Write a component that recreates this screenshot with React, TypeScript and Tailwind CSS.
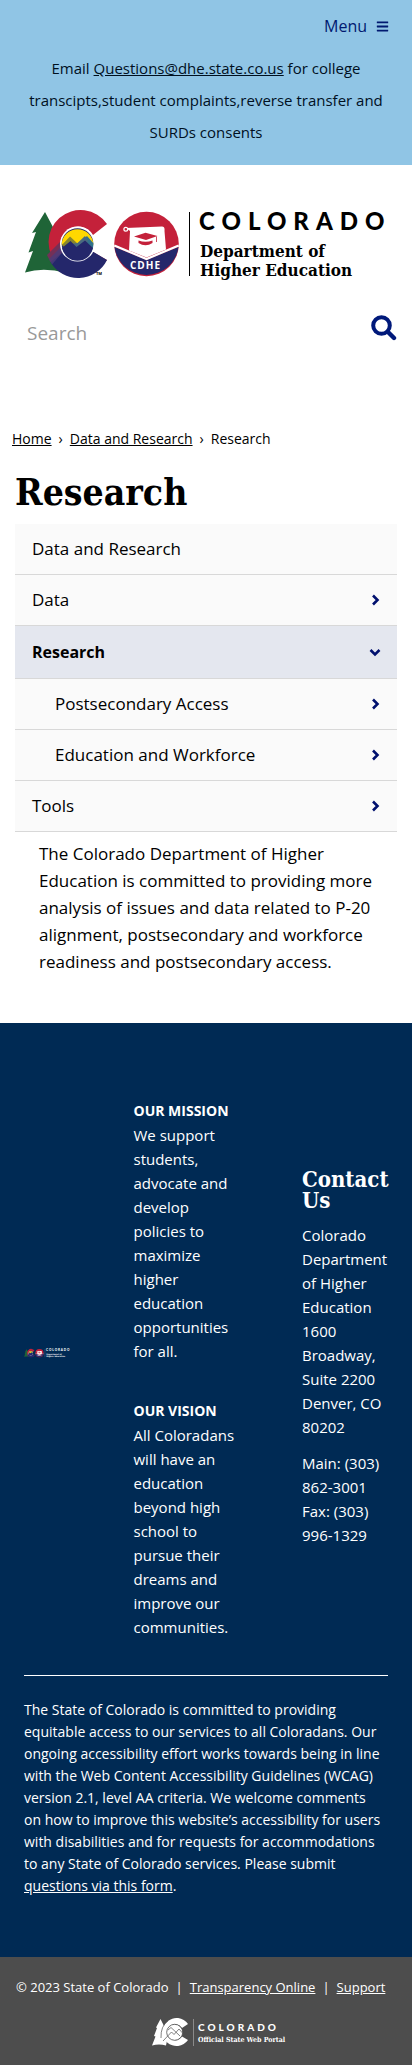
import { FaBars } from "react-icons/fa";

const slab = "font-['DejaVu_Serif_Condensed','DejaVu_Serif',serif] font-bold";

function DepartmentLogo({ className, onDark = false }: { className: string; onDark?: boolean }) {
  const ink = onDark ? "#ffffff" : "#000000";
  return (
    <svg viewBox="0 0 364 70" className={`overflow-visible ${className}`} role="img" aria-label="Colorado Department of Higher Education">
      <path d="M21 1 L8 22 L12 21 L4.500 41.500 L9 40 L1 61.500 Q20 56 42 62 L46 20 L30 18 Z" fill="#1f6437" />
      <path d="M83 13 A32 32 0 1 0 83 49 L69 41 A17 17 0 1 1 69 24 Z" fill="#c4213a" />
      <path d="M26.500 51 L42 36 L60 40 L69.500 41 L83 49 A32 32 0 0 1 26.500 51 Z" fill="#24276b" />
      <path d="M23 44 L38 29 L45 36 L26.500 51 Z" fill="#733057" />
      <path d="M25 48 L40 33 L43 36 L28 53.500 Z" fill="#4b3c7b" opacity=".8" />
      <circle cx="53.500" cy="33" r="17.500" fill={onDark ? "#e7e9ee" : "#ffffff"} />
      <circle cx="53.500" cy="33" r="15.800" fill="#24276b" />
      <path d="M37.700 34 A15.800 15.800 0 0 1 69.300 34 L64 30 L53 38 L46 30 Z" fill="#ffd800" />
      <path d="M37.800 34 L46 25.500 L54 33 L46 41 Z" fill="#87862d" />
      <path d="M51 35 L63 25 L69.300 32 L69 37 L60 39 Z" fill="#31718b" />
      <path d="M46 33 L53.500 32 L61 25 L64 30 L57 41 L48 39 Z" fill="#4a6a80" />
      <path d="M38 37 L46.500 30 L52.500 36 L61 29.500 L69 37 A15.800 15.800 0 0 1 38 37 Z" fill="#24276b" />
      <text x="72" y="64" className="font-['Open_Sans',sans-serif] text-[4px] font-bold" fill={ink}>TM</text>
      <circle cx="122.500" cy="33" r="32.300" fill="#c4213a" />
      <path d="M90.500 36 L122.500 49 L154.500 36 A32.300 32.300 0 0 1 90.500 36 Z" fill="#24276b" />
      <path d="M90.300 34.500 L122.500 48 L154.700 34.500" fill="none" stroke="#fff" strokeWidth="2.200" />
      <path d="M102 17 L138 15.500 Q141 15.500 140.500 20 L142 38.500 L122.500 46.500 L105 39.500 L106 20 Z" fill="#fff" />
      <circle cx="101.800" cy="18.300" r="1.900" fill="#c4213a" stroke="#fff" strokeWidth="1.200" />
      <path d="M110 25.500 L121.500 21.800 L133.500 25 L122 29 Z" fill="#c4213a" />
      <path d="M114.500 29.500 Q121.500 32 128.500 29.500 V32 Q121.500 36.500 114.500 32 Z" fill="#c4213a" />
      <path d="M132.500 25.500 V31" stroke="#c4213a" strokeWidth=".8" />
      <text x="106" y="58" className="font-['Open_Sans',sans-serif] text-[10px] font-bold tracking-[1px]" fill="#fff">CDHE</text>
      <path d="M165.500 1 V65" stroke={ink} strokeWidth="1" />
      <text x="175" y="19" className="font-['Lato',sans-serif] text-[24px] font-black tracking-[7px]" fill={ink}>COLORADO</text>
      <text x="176" y="46" className={`${slab} text-[17px]`} fill={ink}>Department of</text>
      <text x="176" y="65" className={`${slab} text-[17px]`} fill={ink}>Higher Education</text>
    </svg>
  );
}

function PortalLogo() {
  return (
    <svg viewBox="0 0 136 29" className="h-[29px] w-[136px]" role="img" aria-label="Colorado Official State Web Portal">
      <path d="M8.500 1 L4 9.500 L5 10 L2 18 L3.500 18.500 L0 27.500 Q7 25.500 14 27.500 L18 8 L12 8 Z" fill="#fff" />
      <path d="M36 6 A14 14 0 1 0 36 22 L30 18.500 A8 8 0 1 1 30 10 Z" fill="#fff" />
      <circle cx="22.700" cy="14.300" r="8" fill="#fff" stroke="#4d4d4d" strokeWidth=".8" />
      <path d="M9 20 Q8.500 8 16 3 M11 23 L19.500 14 L22 16.500 L27 11 L30.500 15 M16 12 L19 9.500 L28 18" fill="none" stroke="#4d4d4d" strokeWidth=".7" />
      <path d="M41.500 1 V28" stroke="#9a9a9a" strokeWidth=".8" />
      <text x="46" y="13" className="font-['Lato',sans-serif] text-[10px] font-black tracking-[3px]" fill="#fff">COLORADO</text>
      <text x="46" y="24" className={`${slab} text-[7px]`} fill="#fff">Official State Web Portal</text>
    </svg>
  );
}

function Chevron({ down = false }: { down?: boolean }) {
  return (
    <svg viewBox="0 0 12 12" className="size-3" fill="none" stroke="currentColor" strokeWidth="2.600" aria-hidden="true">
      <path d={down ? "M1.500 4 L6 8.500 L10.500 4" : "M4 1.500 L8.500 6 L4 10.500"} />
    </svg>
  );
}

function Magnifier() {
  return (
    <svg viewBox="0 0 26 26" className="size-[26px]" fill="none" stroke="currentColor" aria-hidden="true">
      <circle cx="10.500" cy="10.500" r="8.300" strokeWidth="4" />
      <path d="M17 17 L23 23" strokeWidth="4.400" strokeLinecap="round" />
    </svg>
  );
}

type Item = { label: string; expandable?: boolean; active?: boolean; child?: boolean };

const items: Item[] = [
  { label: "Data and Research" },
  { label: "Data", expandable: true },
  { label: "Research", expandable: true, active: true },
  { label: "Postsecondary Access", expandable: true, child: true },
  { label: "Education and Workforce", expandable: true, child: true },
  { label: "Tools", expandable: true },
];

function SectionMenu() {
  return (
    <nav aria-label="Section" className="mx-[15px]">
      <ul>
        {items.map(({ label, expandable, active, child }) => (
          <li
            key={label}
            className={`flex items-center justify-between border-b border-[#d8d8d8] pr-4 ${child ? "pl-10" : "pl-[17px]"} ${active ? "h-[53px] bg-[#e4e7ef] font-bold" : "h-[51px] bg-[#fafafa]"}`}
          >
            <a href="#" className={active ? "text-[16px] leading-6" : "text-[17px] leading-6"}>{label}</a>
            {expandable && (
              <button type="button" aria-label={`Toggle ${label}`} className="text-[#00106e]">
                <Chevron down={active} />
              </button>
            )}
          </li>
        ))}
      </ul>
    </nav>
  );
}

export default function App() {
  return (
    <div className="bg-white font-['Open_Sans',sans-serif] text-black">
      <header>
        <div className="bg-[#90c5e5] px-5 pt-3 pb-[17px]">
          <div className="flex justify-end pr-[3px]">
            <button type="button" className="flex items-center gap-[9px] text-[16px] leading-7 text-[#001970]">
              Menu <FaBars size={13} />
            </button>
          </div>
          <p className="pt-3 text-center text-[15px] leading-8 text-[#00101f]">
            Email <a href="mailto:Questions@dhe.state.co.us" className="underline">Questions@dhe.state.co.us</a> for college
            <br />transcipts,student complaints,reverse transfer and
            <br />SURDs consents
          </p>
        </div>
        <a href="#" className="block px-6 pt-[46px]">
          <DepartmentLogo className="h-auto w-full" />
        </a>
        <form className="mt-8 flex items-start pr-[15px] pl-[27px]" onSubmit={(e) => e.preventDefault()}>
          <input
            type="search"
            aria-label="Search"
            placeholder="Search"
            className="h-10 min-w-0 flex-1 bg-transparent text-[19px] outline-none placeholder:text-[#999999]"
          />
          <button type="submit" aria-label="Submit search" className="pt-[2px] text-[#00197a]">
            <Magnifier />
          </button>
        </form>
      </header>

      <main>
        <nav aria-label="Breadcrumb" className="px-3 pt-[76px]">
          <ol className="flex gap-[7px] text-[14px] leading-5">
            <li><a href="#" className="underline">Home</a></li>
            <li aria-hidden="true">›</li>
            <li><a href="#" className="underline">Data and Research</a></li>
            <li aria-hidden="true">›</li>
            <li>Research</li>
          </ol>
        </nav>
        <h1 className={`${slab} px-[15px] pt-[23px] pb-3 text-[37px] leading-10`}>Research</h1>
        <SectionMenu />
        <p className="px-[39px] pt-2 pb-12 text-[17px] leading-[27px] whitespace-nowrap">
          The Colorado Department of Higher
          <br />Education is committed to providing more
          <br />analysis of issues and data related to P-20
          <br />alignment, postsecondary and workforce
          <br />readiness and postsecondary access.
        </p>
      </main>

      <footer className="text-white">
        <div className="bg-[#002a54] px-6 pt-[76px] pb-[60px]">
          <div className="flex items-center justify-between border-b border-white pb-9 text-[15px] leading-6">
            <div className="w-[46px] pb-8">
              <DepartmentLogo onDark className="h-auto w-full" />
            </div>
            <div className="flex w-[105px] flex-col gap-9">
              <section>
                <h2 className="text-[14px] leading-6 font-bold whitespace-nowrap">OUR MISSION</h2>
                <p>We support<br />students,<br />advocate and<br />develop<br />policies to<br />maximize<br />higher<br />education<br />opportunities<br />for all.</p>
              </section>
              <section>
                <h2 className="text-[14px] leading-6 font-bold whitespace-nowrap">OUR VISION</h2>
                <p className="whitespace-nowrap">All Coloradans<br />will have an<br />education<br />beyond high<br />school to<br />pursue their<br />dreams and<br />improve our<br />communities.</p>
              </section>
            </div>
            <section className="w-[86px] pb-[22px] whitespace-nowrap">
              <h2 className={`${slab} pb-3 text-[22px] leading-[21px]`}>Contact<br />Us</h2>
              <p>Colorado<br />Department<br />of Higher<br />Education<br />1600<br />Broadway,<br />Suite 2200<br />Denver, CO<br />80202</p>
              <p className="pt-3">Main: (303)<br />862-3001<br />Fax: (303)<br />996-1329</p>
            </section>
          </div>
          <p className="pt-[23px] text-[14px] leading-[22px] whitespace-nowrap">
            The State of Colorado is committed to providing
            <br />equitable access to our services to all Coloradans. Our
            <br />ongoing accessibility effort works towards being in line
            <br />with the Web Content Accessibility Guidelines (WCAG)
            <br />version 2.1, level AA criteria. We welcome comments
            <br />on how to improve this website’s accessibility for users
            <br />with disabilities and for requests for accommodations
            <br />to any State of Colorado services. Please submit
            <br /><a href="#" className="underline">questions via this form</a>.
          </p>
        </div>
        <div className="flex flex-col items-center gap-5 border-b border-[#90c5e5] bg-[#4d4d4d] px-4 pt-[19px] pb-[18px]">
          <div className="flex gap-[7px] self-start text-[13px] leading-[22px] whitespace-nowrap">
            <span>© 2023 State of Colorado</span>
            <span>|</span>
            <a href="#" className="underline">Transparency Online</a>
            <span>|</span>
            <a href="#" className="underline">Support</a>
          </div>
          <div className="pl-7">
            <PortalLogo />
          </div>
        </div>
      </footer>
    </div>
  );
}
